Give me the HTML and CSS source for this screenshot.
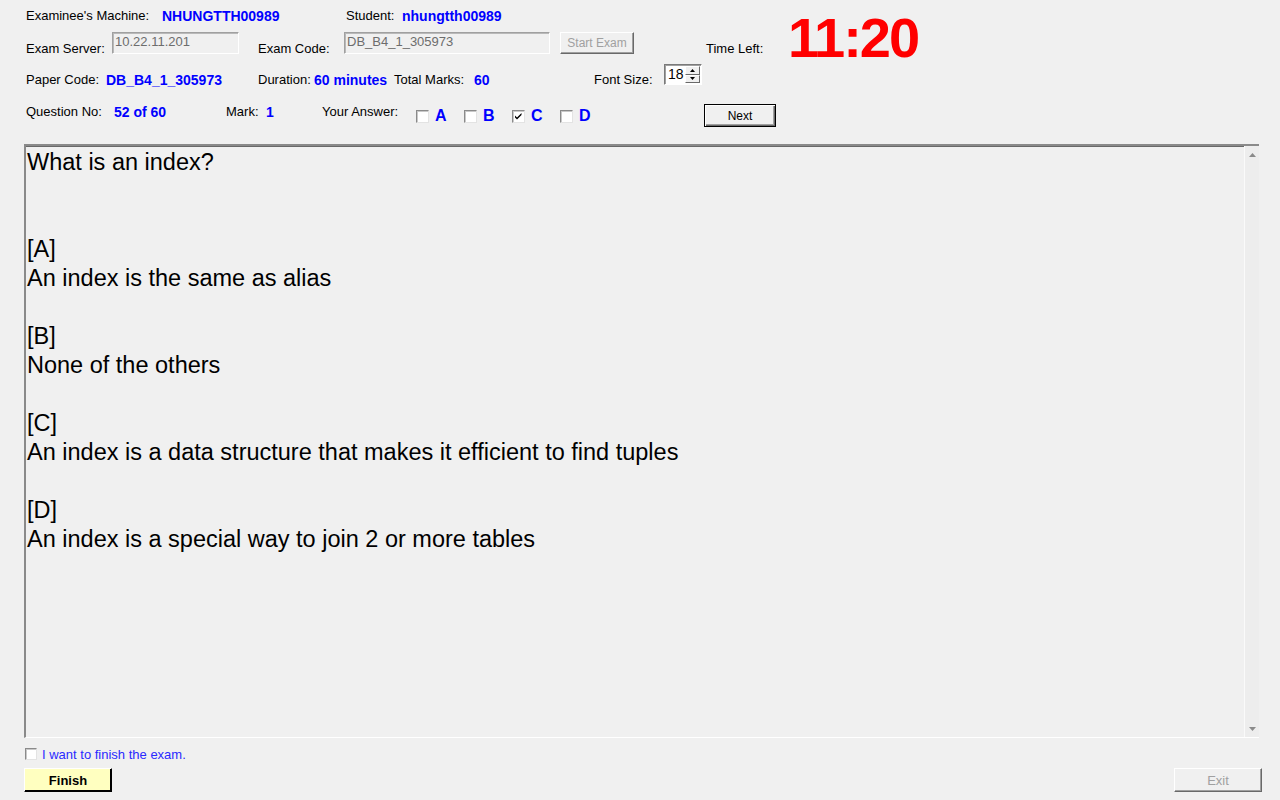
FILE: index.html
```html
<!DOCTYPE html>
<html>
<head>
<meta charset="utf-8">
<link rel="stylesheet" href="styles.css">
</head>
<body>
<div class="header">
  <div class="row r1">
    <span class="lbl w136">Examinee's Machine:</span>
    <span class="val w184">NHUNGTTH00989</span>
    <span class="lbl w56">Student:</span>
    <span class="val">nhungtth00989</span>
  </div>
  <div class="row r2">
    <span class="lbl w86 lb2">Exam Server:</span>
    <div class="field w127">10.22.11.201</div>
    <span class="lbl w86 lb2 ml19">Exam Code:</span>
    <div class="field w206">DB_B4_1_305973</div>
    <div class="btn start">Start Exam</div>
    <span class="lbl w82 lb2 ml72">Time Left:</span>
    <span class="timer">11:20</span>
  </div>
  <div class="row r3">
    <span class="lbl w80">Paper Code:</span>
    <span class="val w152">DB_B4_1_305973</span>
    <span class="lbl w56">Duration:</span>
    <span class="val w80">60 minutes</span>
    <span class="lbl w80">Total Marks:</span>
    <span class="val w120">60</span>
    <span class="lbl w70">Font Size:</span>
    <div class="spin">
      <span class="spin-val">18</span>
      <div class="spin-btns">
        <div class="spin-b"><svg width="5" height="3" viewBox="0 0 5 3"><path d="M2.5 0 L5 3 L0 3 Z" fill="#000"/></svg></div>
        <div class="spin-b"><svg width="5" height="3" viewBox="0 0 5 3"><path d="M0 0 L5 0 L2.5 3 Z" fill="#000"/></svg></div>
      </div>
    </div>
  </div>
  <div class="row r4">
    <span class="lbl w88">Question No:</span>
    <span class="val w112">52 of 60</span>
    <span class="lbl w40">Mark:</span>
    <span class="val w56">1</span>
    <span class="lbl w94">Your Answer:</span>
    <div class="opts">
      <label class="opt"><span class="cb"></span><span class="opt-l">A</span></label>
      <label class="opt"><span class="cb"></span><span class="opt-l">B</span></label>
      <label class="opt"><span class="cb"><svg width="11" height="11" viewBox="0 0 11 11"><path d="M2 4.5 L4 6.5 L8.5 2 L8.5 4 L4 8.5 L2 6.5 Z" fill="#000"/></svg></span><span class="opt-l">C</span></label>
      <label class="opt"><span class="cb"></span><span class="opt-l">D</span></label>
    </div>
    <div class="btn next">Next</div>
  </div>
</div>

<div class="panel">
  <div class="qtext">
    <p>What is an index?</p>
    <p>&nbsp;</p>
    <p>&nbsp;</p>
    <p>[A]</p>
    <p>An index is the same as alias</p>
    <p>&nbsp;</p>
    <p>[B]</p>
    <p>None of the others</p>
    <p>&nbsp;</p>
    <p>[C]</p>
    <p>An index is a data structure that makes it efficient to find tuples</p>
    <p>&nbsp;</p>
    <p>[D]</p>
    <p>An index is a special way to join 2 or more tables</p>
  </div>
  <div class="vscroll">
    <svg class="arr" width="7" height="4" viewBox="0 0 7 4"><path d="M3.5 0 L7 4 L0 4 Z" fill="#8a8a8a"/></svg>
    <svg class="arr" width="7" height="4" viewBox="0 0 7 4"><path d="M0 0 L7 0 L3.5 4 Z" fill="#8a8a8a"/></svg>
  </div>
</div>

<div class="finish-row">
  <span class="cb cb-finish"></span>
  <span class="finish-lbl">I want to finish the exam.</span>
</div>
<div class="bottom">
  <div class="btn finish">Finish</div>
  <div class="btn exit">Exit</div>
</div>
</body>
</html>
```

FILE: styles.css
```css
* { box-sizing: border-box; }
body {
  margin: 0;
  width: 1280px;
  height: 800px;
  overflow: hidden;
  background: #f0f0f0;
  font-family: "Liberation Sans", Arial, sans-serif;
  font-size: 13px;
  color: #000;
}
.header { padding-left: 26px; }
.row { display: flex; white-space: nowrap; }
.lbl { font-size: 13px; line-height: 16px; color: #000; }
.val { font-size: 14px; line-height: 16px; font-weight: bold; color: #0000ff; }

.w40 { width: 40px; } .w56 { width: 56px; } .w70 { width: 70px; }
.w80 { width: 80px; } .w82 { width: 82px; } .w86 { width: 86px; }
.w88 { width: 88px; } .w94 { width: 94px; } .w112 { width: 112px; }
.w120 { width: 120px; } .w127 { width: 127px; } .w136 { width: 136px; }
.w152 { width: 152px; } .w184 { width: 184px; } .w206 { width: 206px; }
.ml19 { margin-left: 19px; } .ml72 { margin-left: 72px; }

.r1 { margin-top: 8px; height: 16px; align-items: center; }
.r2 { margin-top: 8px; height: 24px; align-items: flex-end; }
.lb2 { margin-bottom: -1px; }
.r3 { margin-top: 8px; height: 24px; align-items: flex-end; }
.r4 { margin-top: 16px; height: 22px; align-items: flex-start; }

.field {
  height: 22px;
  margin-bottom: 2px;
  border: 1px solid;
  border-color: #a0a0a0 #ffffff #ffffff #a0a0a0;
  box-shadow: inset 1px 1px 0 #b9b9b9;
  background: #f0f0f0;
  color: #6d6d6d;
  font-size: 13px;
  line-height: 18px;
  padding: 0 2px;
}
.btn {
  display: flex;
  align-items: center;
  justify-content: center;
  background: #f0f0f0;
  border: 1px solid;
  border-color: #ffffff #696969 #696969 #ffffff;
  box-shadow: inset -1px -1px 0 #a0a0a0;
  font-size: 12px;
}
.start {
  margin-left: 10px;
  margin-bottom: 2px;
  width: 74px;
  height: 22px;
  color: #a0a0a0;
}
.timer {
  font-size: 56px;
  line-height: 56px;
  font-weight: bold;
  color: #ff0000;
  letter-spacing: -2px;
  margin-bottom: -10px;
}

.spin {
  display: flex;
  width: 38px;
  height: 21px;
  margin-bottom: 3px;
  border: 1px solid;
  border-color: #7a7a7a #ffffff #ffffff #7a7a7a;
  box-shadow: inset 1px 1px 0 #a0a0a0;
  background: #fff;
}
.spin-val {
  flex: 1;
  font-size: 14px;
  line-height: 18px;
  padding-left: 3px;
}
.spin-btns {
  width: 16px;
  display: flex;
  flex-direction: column;
  padding: 1px 1px 1px 0;
}
.spin-b {
  flex: 1;
  display: flex;
  align-items: center;
  justify-content: center;
  background: #f0f0f0;
  border: 1px solid;
  border-color: #ffffff #696969 #696969 #ffffff;
}
.spin-b svg { display: block; }

.opts { display: flex; margin-top: 5px; }
.opt { display: flex; align-items: center; width: 48px; height: 14px; }
.cb {
  display: flex;
  align-items: center;
  justify-content: center;
  width: 13px;
  height: 13px;
  background: #fff;
  border: 1px solid;
  border-color: #8a8a8a #e3e3e3 #e3e3e3 #8a8a8a;
  box-shadow: inset 1px 1px 0 #c8c8c8;
  flex: none;
}
.cb svg { display: block; }
.opt-l {
  margin-left: 6px;
  font-size: 16px;
  font-weight: bold;
  color: #0000ff;
  line-height: 16px;
}
.next {
  margin-left: 96px;
  width: 72px;
  height: 23px;
  border: 1px solid #000;
  box-shadow: inset 1px 1px 0 #ffffff, inset -1px -1px 0 #696969, inset -2px -2px 0 #a0a0a0;
  color: #000;
}

.panel {
  display: flex;
  margin: 18px 0 0 24px;
  width: 1235px;
  height: 594px;
  border-top: 2px solid #8a8a8a;
  border-left: 2px solid #8a8a8a;
  border-bottom: 1px solid #ffffff;
  box-shadow: inset 0 1px 0 #696969;
}
.qtext {
  flex: 1;
  padding: 2px 0 0 1px;
  font-size: 23.5px;
  line-height: 29px;
  color: #000;
}
.qtext p { margin: 0; white-space: nowrap; }
.vscroll {
  width: 15px;
  display: flex;
  flex-direction: column;
  justify-content: space-between;
  align-items: center;
  padding: 7px 0 6px 0;
  border-left: 1px solid #fafafa;
  background: #ededed;
}
.arr { display: block; }

.finish-row {
  display: flex;
  align-items: center;
  margin: 9px 0 0 25px;
  height: 14px;
}
.cb-finish { width: 12px; height: 12px; }
.finish-lbl {
  margin-left: 5px;
  font-size: 13px;
  color: #2a2aff;
}
.bottom {
  display: flex;
  justify-content: space-between;
  margin: 7px 18px 0 24px;
}
.finish {
  width: 88px;
  height: 24px;
  background: #ffffc0;
  border: 1px solid;
  border-color: #ffffff #000 #000 #ffffff;
  box-shadow: inset -1px -1px 0 #000;
  font-size: 13px;
  font-weight: bold;
  color: #000;
}
.exit {
  width: 88px;
  height: 24px;
  color: #a0a0a0;
  font-size: 13px;
}
```
